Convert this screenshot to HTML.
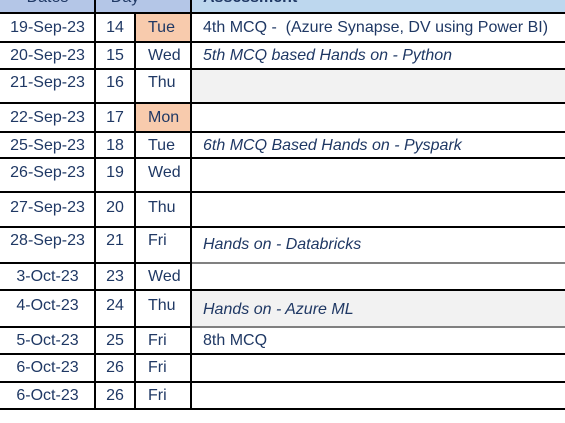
<!DOCTYPE html>
<html><head><style>
body{margin:0;width:565px;height:423px;background:#fff;position:relative;overflow:hidden;font-family:"Liberation Sans",sans-serif;font-size:16px;color:#1f3864}
.a{position:absolute}
.h{position:absolute;height:2px;background:#000}
.v{position:absolute;width:2px;background:#000}
.t{position:absolute;line-height:18px;white-space:nowrap;margin-top:1px}
.c{text-align:center}
i{font-style:italic}
</style></head><body>
<div class="a" style="left:0;top:0;width:191px;height:13px;background:#b4c6e7"></div>
<div class="a" style="left:191px;top:0;width:374px;height:13px;background:#bdd7ee"></div>
<div class="t c" style="left:0;width:95px;top:-12px">Dates</div>
<div class="t c" style="left:95px;width:60px;top:-12px">Day</div>
<div class="t" style="left:203px;top:-12px;font-weight:bold">Assessment</div>
<div class="a" style="left:136px;top:13px;width:55px;height:29px;background:#f8cbad"></div>
<div class="a" style="left:136px;top:103px;width:55px;height:29px;background:#f8cbad"></div>
<div class="a" style="left:192px;top:69px;width:373px;height:34px;background:#f2f2f2"></div>
<div class="a" style="left:192px;top:290px;width:373px;height:37px;background:#f2f2f2"></div>

<div class="h" style="left:0;width:565px;top:12px"></div>
<div class="h" style="left:0;width:565px;top:41px"></div>
<div class="h" style="left:0;width:565px;top:68px"></div>
<div class="h" style="left:0;width:565px;top:102px"></div>
<div class="h" style="left:0;width:565px;top:131px"></div>
<div class="h" style="left:0;width:565px;top:157px"></div>
<div class="h" style="left:0;width:565px;top:191px"></div>
<div class="h" style="left:0;width:565px;top:226px"></div>
<div class="h" style="left:0;width:191px;top:262px"></div>
<div class="h" style="left:191px;width:374px;top:262px;background:#808080"></div>
<div class="h" style="left:0;width:565px;top:289px"></div>
<div class="h" style="left:0;width:191px;top:326px"></div>
<div class="h" style="left:191px;width:374px;top:326px;background:#808080"></div>
<div class="h" style="left:0;width:565px;top:353px"></div>
<div class="h" style="left:0;width:565px;top:381px"></div>
<div class="h" style="left:0;width:565px;top:408px"></div>
<div class="v" style="left:94px;top:0;height:410px"></div>
<div class="v" style="left:134px;top:13px;height:397px"></div>
<div class="v" style="left:190px;top:0;height:410px"></div>

<div class="t c" style="left:0;width:95px;top:18px">19-Sep-23</div><div class="t c" style="left:95px;width:40px;top:18px">14</div><div class="t" style="left:148px;top:18px">Tue</div><div class="t" style="left:203px;top:18px">4th MCQ -&nbsp; (Azure Synapse, DV using Power BI)</div>
<div class="t c" style="left:0;width:95px;top:46px">20-Sep-23</div><div class="t c" style="left:95px;width:40px;top:46px">15</div><div class="t" style="left:148px;top:46px">Wed</div><div class="t" style="left:203px;top:46px"><i>5th MCQ based Hands on - Python</i></div>
<div class="t c" style="left:0;width:95px;top:73px">21-Sep-23</div><div class="t c" style="left:95px;width:40px;top:73px">16</div><div class="t" style="left:148px;top:73px">Thu</div>
<div class="t c" style="left:0;width:95px;top:108px">22-Sep-23</div><div class="t c" style="left:95px;width:40px;top:108px">17</div><div class="t" style="left:148px;top:108px">Mon</div>
<div class="t c" style="left:0;width:95px;top:136px">25-Sep-23</div><div class="t c" style="left:95px;width:40px;top:136px">18</div><div class="t" style="left:148px;top:136px">Tue</div><div class="t" style="left:203px;top:136px"><i>6th MCQ Based Hands on - Pyspark</i></div>
<div class="t c" style="left:0;width:95px;top:163px">26-Sep-23</div><div class="t c" style="left:95px;width:40px;top:163px">19</div><div class="t" style="left:148px;top:163px">Wed</div>
<div class="t c" style="left:0;width:95px;top:198px">27-Sep-23</div><div class="t c" style="left:95px;width:40px;top:198px">20</div><div class="t" style="left:148px;top:198px">Thu</div>
<div class="t c" style="left:0;width:95px;top:231px">28-Sep-23</div><div class="t c" style="left:95px;width:40px;top:231px">21</div><div class="t" style="left:148px;top:231px">Fri</div><div class="t" style="left:203px;top:235px"><i>Hands on - Databricks</i></div>
<div class="t c" style="left:0;width:95px;top:267px">3-Oct-23</div><div class="t c" style="left:95px;width:40px;top:267px">23</div><div class="t" style="left:148px;top:267px">Wed</div>
<div class="t c" style="left:0;width:95px;top:296px">4-Oct-23</div><div class="t c" style="left:95px;width:40px;top:296px">24</div><div class="t" style="left:148px;top:296px">Thu</div><div class="t" style="left:203px;top:300px"><i>Hands on - Azure ML</i></div>
<div class="t c" style="left:0;width:95px;top:331px">5-Oct-23</div><div class="t c" style="left:95px;width:40px;top:331px">25</div><div class="t" style="left:148px;top:331px">Fri</div><div class="t" style="left:203px;top:331px">8th MCQ</div>
<div class="t c" style="left:0;width:95px;top:358px">6-Oct-23</div><div class="t c" style="left:95px;width:40px;top:358px">26</div><div class="t" style="left:148px;top:358px">Fri</div>
<div class="t c" style="left:0;width:95px;top:386px">6-Oct-23</div><div class="t c" style="left:95px;width:40px;top:386px">26</div><div class="t" style="left:148px;top:386px">Fri</div>
</body></html>
